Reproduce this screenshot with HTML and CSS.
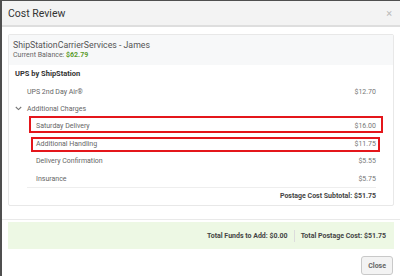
FILE: index.html
```html
<!DOCTYPE html>
<html lang="en">
<head>
    <meta charset="UTF-8">
    <meta name="viewport" content="width=device-width, initial-scale=1.0">
    <title>Cost Review</title>
    <link rel="stylesheet" href="styles.css">
</head>
<body>

    <div class="modal">
        <div class="modal-header">
            <span class="modal-title">Cost Review</span>
            <span class="close-x">&times;</span>
        </div>

        <div class="modal-body">
            <div class="card">
                <div class="card-header">
                    <div class="account">ShipStationCarrierServices - James</div>
                    <div class="balance">Current Balance: <span class="balance-amount">$62.79</span></div>
                </div>

                <div class="card-body">
                    <div class="provider">UPS by ShipStation</div>

                    <div class="charges">
                        <div class="row">
                            <span>UPS 2nd Day Air®</span>
                            <span class="amount">$12.70</span>
                        </div>
                        <div class="row toggle">
                            <svg class="chevron" width="7" height="5" viewBox="0 0 7 5">
                                <path d="M0.8 1 L3.5 3.6 L6.2 1" fill="none" stroke="#777" stroke-width="1.1"/>
                            </svg>
                            <span>Additional Charges</span>
                        </div>
                        <div class="sub-charges">
                            <div class="row sub marked marked-a">
                                <span>Saturday Delivery</span>
                                <span class="amount">$16.00</span>
                            </div>
                            <div class="row sub marked marked-b">
                                <span>Additional Handling</span>
                                <span class="amount">$11.75</span>
                            </div>
                            <div class="row sub">
                                <span>Delivery Confirmation</span>
                                <span class="amount">$5.55</span>
                            </div>
                            <div class="row sub">
                                <span>Insurance</span>
                                <span class="amount">$5.75</span>
                            </div>
                        </div>
                        <div class="subtotal">Postage Cost Subtotal: $51.75</div>
                    </div>
                </div>
            </div>
        </div>

        <div class="modal-footer">
            <div class="totals">
                <span>Total Funds to Add: $0.00</span>
                <span class="divider"></span>
                <span>Total Postage Cost: $51.75</span>
            </div>
            <div class="actions">
                <button class="btn">Close</button>
            </div>
        </div>
    </div>

</body>
</html>
```

FILE: styles.css
```css
body {
    margin: 0;
    padding: 1px 0 0 2px;
    background: #4f4f4f;
    font-family: Roboto, 'Noto Sans', sans-serif;
    color: #666;
    height: 276px;
    box-sizing: border-box;
    overflow: hidden;
}

.modal {
    background: #fff;
    height: 100%;
}

/* Kopfzeile */
.modal-header {
    height: 24px;
    background: #f3f3f3;
    border-bottom: 2px solid #dedede;
    display: flex;
    align-items: center;
    justify-content: space-between;
    padding: 0 8px 0 6px;
}

.modal-title {
    font-size: 10.5px;
    color: #333;
}

.close-x {
    font-size: 11px;
    color: #bbb;
    line-height: 1;
}

.modal-body {
    padding: 7px 6px 13px;
    border-bottom: 1px solid #e9e9e9;
}

.card {
    border: 1px solid #e8e8e8;
    border-radius: 2px;
}

.card-header {
    background: #f7f8f9;
    padding: 5px 4px 4px;
    height: 21px;
}

.account {
    font-size: 8.75px;
    color: #555;
    line-height: 11px;
}

.balance {
    font-size: 7px;
    color: #666;
    line-height: 9px;
}

.balance-amount {
    color: #5b9b2c;
    font-weight: bold;
}

.card-body {
    padding: 3px 17px 0 6px;
}

.provider {
    font-size: 7.5px;
    font-weight: bold;
    color: #333;
    line-height: 12px;
}

.charges {
    margin: 3px 0 0 12px;
}

.row {
    display: flex;
    justify-content: space-between;
    align-items: center;
    height: 17.4px;
    font-size: 7px;
    color: #666;
}

.amount {
    color: #777;
}

.toggle {
    justify-content: flex-start;
    position: relative;
}

.chevron {
    position: absolute;
    left: -12px;
    top: 6px;
}

.sub-charges {
    border-bottom: 1px solid #eee;
}

.sub {
    padding-left: 9px;
}

/* rote Markierung */
.marked {
    position: relative;
}

.marked::after {
    content: "";
    position: absolute;
    border: 2px solid #e4161b;
}

.marked-a::after {
    left: 2px;
    right: -7px;
    top: -1.3px;
    bottom: 1.7px;
}

.marked-b::after {
    left: 4px;
    right: -4px;
    top: 1.7px;
    bottom: 0.7px;
}

.subtotal {
    text-align: right;
    font-size: 7px;
    font-weight: bold;
    color: #444;
    line-height: 17px;
}

/* Fusszeile */
.modal-footer {
    padding: 2px 6px 0;
}

.totals {
    background: #edf8e4;
    height: 27px;
    display: flex;
    align-items: center;
    justify-content: flex-end;
    gap: 6px;
    padding-right: 8px;
    font-size: 7px;
    font-weight: bold;
    color: #444;
}

.divider {
    width: 1px;
    height: 12px;
    background: #dcdcdc;
}

.actions {
    display: flex;
    justify-content: flex-end;
    padding-top: 7px;
}

.btn {
    font-family: Roboto, sans-serif;
    font-size: 7px;
    font-weight: bold;
    color: #666;
    background: #f3f3f3;
    border: 1px solid #c9c9c9;
    border-radius: 3px;
    padding: 0 6px;
    height: 19px;
    margin-right: 1px;
}
```
